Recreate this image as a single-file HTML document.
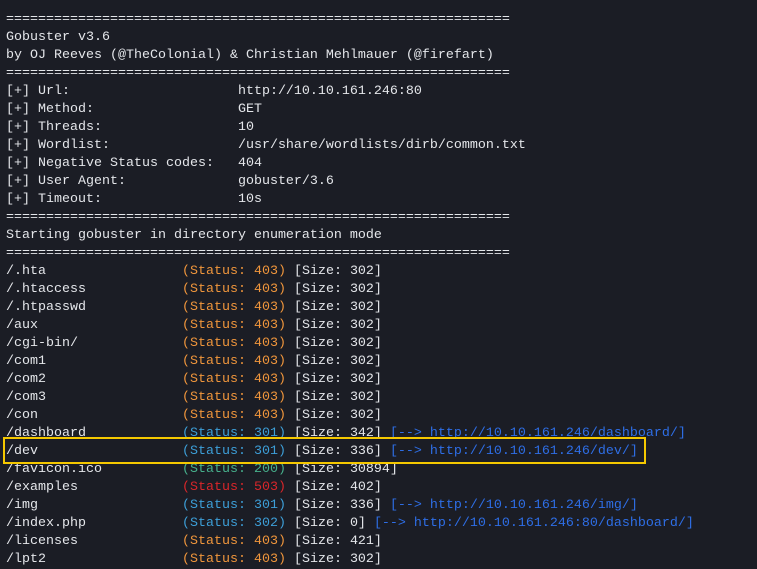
<!DOCTYPE html><html><head><style>
html,body{margin:0;padding:0;background:#1b1d25;width:757px;height:565px;overflow:hidden}
pre{margin:0;position:absolute;left:6px;top:11px;font-family:"Liberation Mono",monospace;font-size:13.33px;line-height:18px;color:#e4e6ea;letter-spacing:0}
.o{color:#f0963c}.b{color:#3d9fd8}.g{color:#47b08c}.r{color:#d8262a}.l{color:#2e6ee6}
.box{position:absolute;left:3px;top:437px;width:639px;height:23px;border:2px solid #f5c800}
</style></head><body>
<pre>===============================================================
Gobuster v3.6
by OJ Reeves (@TheColonial) &amp; Christian Mehlmauer (@firefart)
===============================================================
[+] Url:                     http://10.10.161.246:80
[+] Method:                  GET
[+] Threads:                 10
[+] Wordlist:                /usr/share/wordlists/dirb/common.txt
[+] Negative Status codes:   404
[+] User Agent:              gobuster/3.6
[+] Timeout:                 10s
===============================================================
Starting gobuster in directory enumeration mode
===============================================================
/.hta                 <span class="o">(Status: 403)</span> [Size: 302]
/.htaccess            <span class="o">(Status: 403)</span> [Size: 302]
/.htpasswd            <span class="o">(Status: 403)</span> [Size: 302]
/aux                  <span class="o">(Status: 403)</span> [Size: 302]
/cgi-bin/             <span class="o">(Status: 403)</span> [Size: 302]
/com1                 <span class="o">(Status: 403)</span> [Size: 302]
/com2                 <span class="o">(Status: 403)</span> [Size: 302]
/com3                 <span class="o">(Status: 403)</span> [Size: 302]
/con                  <span class="o">(Status: 403)</span> [Size: 302]
/dashboard            <span class="b">(Status: 301)</span> [Size: 342] <span class="l">[--&gt; http://10.10.161.246/dashboard/]</span>
/dev                  <span class="b">(Status: 301)</span> [Size: 336] <span class="l">[--&gt; http://10.10.161.246/dev/]</span>
/favicon.ico          <span class="g">(Status: 200)</span> [Size: 30894]
/examples             <span class="r">(Status: 503)</span> [Size: 402]
/img                  <span class="b">(Status: 301)</span> [Size: 336] <span class="l">[--&gt; http://10.10.161.246/img/]</span>
/index.php            <span class="b">(Status: 302)</span> [Size: 0] <span class="l">[--&gt; http://10.10.161.246:80/dashboard/]</span>
/licenses             <span class="o">(Status: 403)</span> [Size: 421]
/lpt2                 <span class="o">(Status: 403)</span> [Size: 302]
</pre>
<div class="box"></div>
</body></html>
